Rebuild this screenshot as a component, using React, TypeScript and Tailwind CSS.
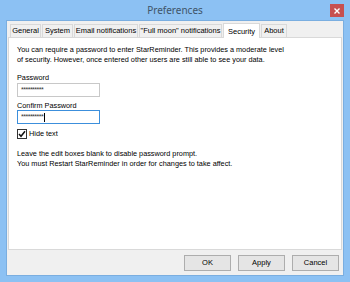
import React from 'react';

// ============================================================================
// PREFERENCES DIALOG (Security tab)
// ============================================================================

const font = { fontFamily: '"Liberation Sans", Arial, sans-serif' };

const tabs = [
  { label: 'General', w: 'w-[31px]' },
  { label: 'System', w: 'w-[31px]' },
  { label: 'Email notifications', w: 'w-[64px]' },
  { label: '"Full moon" notifications', w: 'w-[83px]' },
  { label: 'Security', w: 'w-[37px]', active: true },
  { label: 'About', w: 'w-[26px]' },
];

function Tab({ label, w, active }: { label: string; w: string; active?: boolean }) {
  if (active) {
    return (
      <div
        className={`${w} h-[15px] -mb-px bg-white border border-b-0 border-[#d9d9d9] flex items-start justify-center pt-[2px] text-[7.5px] whitespace-nowrap text-black relative z-10`}
      >
        {label}
      </div>
    );
  }
  return (
    <div
      className={`${w} h-[13px] bg-[#f0f0f0] border border-b-0 border-[#d9d9d9] flex items-center justify-center text-[7.5px] whitespace-nowrap text-black`}
    >
      {label}
    </div>
  );
}

function DialogButton({ label }: { label: string }) {
  return (
    <div className="w-[47px] h-[16px] border border-[#adadad] bg-[#e5e5e5] flex items-center justify-center text-[7.5px] text-black">
      {label}
    </div>
  );
}

export default function App() {
  return (
    <div className="w-[350px] h-[282px] bg-[#8cc1f3] flex flex-col overflow-hidden" style={font}>
      {/* Title bar */}
      <div className="h-[20px] relative flex items-center justify-center">
        <span className="text-[10px] text-[#3f5468] leading-none" style={{ fontFamily: '"Noto Sans", "Open Sans", sans-serif' }}>
          Preferences
        </span>
        <div className="absolute right-[6px] top-[4px] w-[14px] h-[13px] bg-[#c75050] flex items-center justify-center">
          <svg width="6" height="6" viewBox="0 0 6 6">
            <path d="M0.5 0.5 L5.5 5.5 M5.5 0.5 L0.5 5.5" stroke="#fff" strokeWidth="1.4" />
          </svg>
        </div>
      </div>

      {/* Client area */}
      <div className="mx-[6px] w-[338px] h-[256px] bg-[#f0f0f0] border border-[#7aaee0] flex flex-col">
        {/* Tab strip */}
        <div className="flex items-end gap-[1px] pl-[3px] pt-[2px] h-[16px]">
          {tabs.map((t) => (
            <Tab key={t.label} {...t} />
          ))}
        </div>

        {/* Panel */}
        <div className="mx-[1px] h-[213px] bg-white border border-[#d9d9d9] px-[8px] pt-[7px] text-[7.3px] text-black leading-[9.5px] whitespace-nowrap">
          <p>You can require a password to enter StarReminder. This provides a moderate level</p>
          <p>of security. However, once entered other users are still able to see your data.</p>

          <div className="mt-[9px]">Password</div>
          <div className="mt-0 w-[83px] h-[14px] border border-[#c8c8c8] flex items-center pl-[3px] text-[#333] text-[7px] tracking-[-0.5px]">
            **********
          </div>

          <div className="mt-[4px]">Confirm Password</div>
          <div className="mt-0 w-[83px] h-[14px] border border-[#3c8fdc] flex items-center pl-[3px] text-[#333] text-[7px] tracking-[-0.5px]">
            **********
            <span className="ml-[1px] w-px h-[9px] bg-black" />
          </div>

          <div className="mt-[5px] flex items-center gap-[2px]">
            <div className="w-[10px] h-[10px] border border-[#333] bg-white flex items-center justify-center">
              <svg width="8" height="8" viewBox="0 0 8 8">
                <path d="M1 4 L3 6.3 L7 1.2" stroke="#111" strokeWidth="1.5" fill="none" />
              </svg>
            </div>
            <span>Hide text</span>
          </div>

          <p className="mt-[10px]">Leave the edit boxes blank to disable password prompt.</p>
          <p>You must Restart StarReminder in order for changes to take affect.</p>
        </div>

        {/* Buttons */}
        <div className="flex justify-end gap-[7px] pr-[4px] mt-[5px]">
          <DialogButton label="OK" />
          <DialogButton label="Apply" />
          <DialogButton label="Cancel" />
        </div>
      </div>
    </div>
  );
}
